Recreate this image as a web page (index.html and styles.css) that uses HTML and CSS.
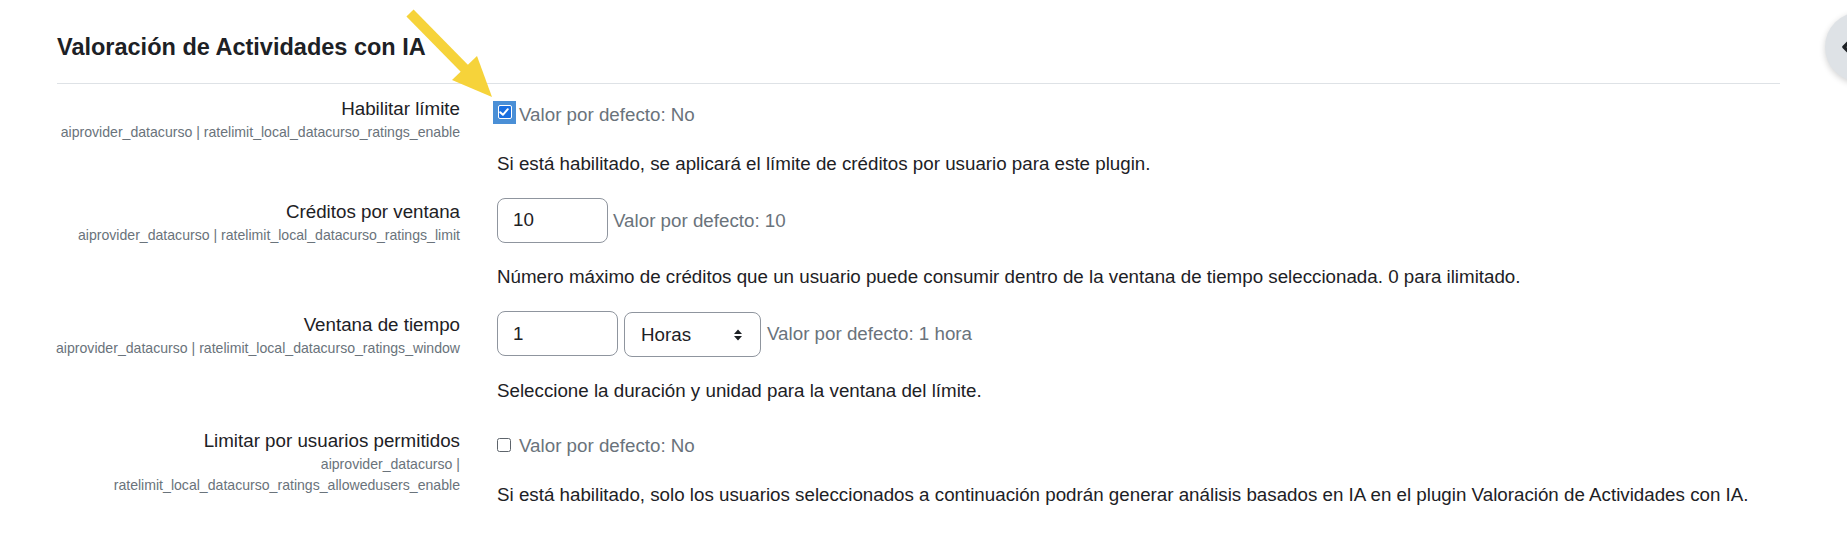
FILE: index.html
```html
<!DOCTYPE html>
<html lang="es">
<head>
<meta charset="utf-8">
<title>Valoración de Actividades con IA</title>
<link rel="stylesheet" href="styles.css">
</head>
<body>
<div class="page">
  <h3 class="section-title">Valoración de Actividades con IA</h3>

  <div class="settings">
    <div class="form-item form-item--check">
      <div class="form-label">
        <label class="label-text">Habilitar límite</label>
        <span class="shortname">aiprovider_datacurso | ratelimit_local_datacurso_ratings_enable</span>
      </div>
      <div class="form-setting">
        <div class="control">
          <span class="check-highlight">
            <span class="checkbox checkbox--checked">
              <svg class="checkmark" viewBox="0 0 14 14" width="14" height="14"><path d="M3.2 7.2 L5.9 9.8 L10.8 4.2" fill="none" stroke="#fff" stroke-width="2" stroke-linecap="round" stroke-linejoin="round"/></svg>
            </span>
          </span>
          <span class="default-info">Valor por defecto: No</span>
        </div>
        <p class="desc">Si está habilitado, se aplicará el límite de créditos por usuario para este plugin.</p>
      </div>
    </div>

    <div class="form-item">
      <div class="form-label">
        <label class="label-text">Créditos por ventana</label>
        <span class="shortname">aiprovider_datacurso | ratelimit_local_datacurso_ratings_limit</span>
      </div>
      <div class="form-setting">
        <div class="control">
          <input class="text-input text-input--credits" type="text" value="10" readonly>
          <span class="default-info">Valor por defecto: 10</span>
        </div>
        <p class="desc">Número máximo de créditos que un usuario puede consumir dentro de la ventana de tiempo seleccionada. 0 para ilimitado.</p>
      </div>
    </div>

    <div class="form-item">
      <div class="form-label">
        <label class="label-text">Ventana de tiempo</label>
        <span class="shortname">aiprovider_datacurso | ratelimit_local_datacurso_ratings_window</span>
      </div>
      <div class="form-setting">
        <div class="control">
          <input class="text-input text-input--window" type="text" value="1" readonly>
          <div class="select-box">
            <span class="select-value">Horas</span>
            <svg class="select-arrows" viewBox="0 0 8 12" width="8" height="12"><path d="M0 5 L4 0.5 L8 5 Z M0 7 L4 11.5 L8 7 Z" fill="#1d2125"/></svg>
          </div>
          <span class="default-info">Valor por defecto: 1 hora</span>
        </div>
        <p class="desc">Seleccione la duración y unidad para la ventana del límite.</p>
      </div>
    </div>

    <div class="form-item form-item--check">
      <div class="form-label">
        <label class="label-text">Limitar por usuarios permitidos</label>
        <span class="shortname">aiprovider_datacurso | ratelimit_local_datacurso_ratings_allowedusers_enable</span>
      </div>
      <div class="form-setting">
        <div class="control">
          <span class="checkbox checkbox--plain"></span>
          <span class="default-info">Valor por defecto: No</span>
        </div>
        <p class="desc">Si está habilitado, solo los usuarios seleccionados a continuación podrán generar análisis basados en IA en el plugin Valoración de Actividades con IA.</p>
      </div>
    </div>
  </div>

  <svg class="annotation-arrow" viewBox="0 0 520 110" width="520" height="110">
    <line x1="410" y1="13" x2="466" y2="70" stroke="#f6d33a" stroke-width="10"/>
    <polygon points="452,80 477,56 492,97" fill="#f6d33a"/>
  </svg>

  <div class="drawer-toggle">
    <svg class="drawer-icon" viewBox="0 0 70 70" width="70" height="70"><path d="M25 29 L19 35 L25 41" fill="none" stroke="#1d2125" stroke-width="3.5" stroke-linecap="round" stroke-linejoin="round"/></svg>
  </div>
</div>
</body>
</html>
```

FILE: styles.css
```css
* {
  box-sizing: border-box;
}

html,
body {
  margin: 0;
  overflow: hidden;
  background: #ffffff;
}

body {
  font-family: "Liberation Sans", Arial, sans-serif;
  color: #1d2125;
  font-size: 18.75px;
  line-height: 27px;
}

.page {
  position: relative;
  height: 535px;
  padding: 33px 67px 0 57px;
}

.section-title {
  margin: 0;
  font-size: 23.5px;
  line-height: 28px;
  font-weight: 700;
  color: #1d2125;
  padding-bottom: 22px;
  border-bottom: 1px solid #dee2e6;
}

.settings {
  display: flex;
  flex-direction: column;
  gap: 17.5px;
  padding-top: 6px;
}

.form-item {
  display: grid;
  grid-template-columns: 403px 1fr;
  column-gap: 37px;
}

.form-label {
  margin-left: -10px;
  text-align: right;
  padding-top: 5.5px;
}

.form-item--check .form-label {
  padding-top: 7px;
}

.label-text {
  display: block;
  font-size: 18.75px;
  line-height: 24px;
  color: #1d2125;
}

.shortname {
  display: block;
  margin-top: 1px;
  font-size: 14.1px;
  line-height: 21px;
  color: #6a737b;
}

.control {
  display: flex;
  align-items: center;
  gap: 6px;
  min-height: 27px;
}

.form-item:not(.form-item--check) .control {
  padding-top: 3.5px;
}

.form-item--check .control {
  align-items: flex-start;
  gap: 0;
  padding-top: 10.5px;
}

.default-info {
  font-size: 18.75px;
  line-height: 27px;
  color: #6a737b;
  white-space: nowrap;
}

.desc {
  margin: 20px 0 0;
  font-size: 18.75px;
  line-height: 27px;
  color: #1d2125;
  white-space: nowrap;
}

.form-item--check .desc {
  margin-top: 22px;
}

/* checkboxes */
.check-highlight {
  display: flex;
  align-items: center;
  justify-content: center;
  width: 23px;
  height: 23px;
  margin-left: -4px;
  margin-right: 3px;
  background: #4a8fd6;
}

.checkbox {
  display: block;
  width: 14px;
  height: 14px;
  border-radius: 2px;
}

.checkbox--checked {
  background: #1a6fe0;
  border: 1.5px solid #ffffff;
  position: relative;
}

.checkmark {
  position: absolute;
  left: -1.5px;
  top: -1.5px;
}

.checkbox--plain {
  margin-top: 5.5px;
  margin-right: 8px;
  border: 1px solid #5d646b;
  background: #ffffff;
  border-radius: 2.5px;
}

/* text inputs */
.text-input {
  height: 45px;
  margin: 0;
  padding: 0 15px;
  border: 1px solid #8f959e;
  border-radius: 8px;
  background: #ffffff;
  font-family: "Liberation Sans", Arial, sans-serif;
  font-size: 18.75px;
  color: #1d2125;
  outline: none;
}

.text-input--credits {
  width: 111px;
  margin-right: -1px;
}

.text-input--window {
  width: 121px;
}

.select-box {
  display: flex;
  align-items: center;
  justify-content: space-between;
  width: 137px;
  height: 45px;
  padding: 0 18px 0 16px;
  border: 1px solid #8f959e;
  border-radius: 8px;
  background: #ffffff;
  font-size: 18.75px;
  color: #1d2125;
  margin-top: 1.5px;
}

.select-arrows {
  display: block;
}

/* overlay annotation */
.annotation-arrow {
  position: absolute;
  left: 0;
  top: 0;
  pointer-events: none;
}

.drawer-toggle {
  position: absolute;
  left: 1825px;
  top: 12px;
  width: 70px;
  height: 70px;
  border-radius: 50%;
  background: #dee2e6;
  box-shadow: 0 2px 6px rgba(0, 0, 0, 0.18);
}

.drawer-icon {
  display: block;
}
```
